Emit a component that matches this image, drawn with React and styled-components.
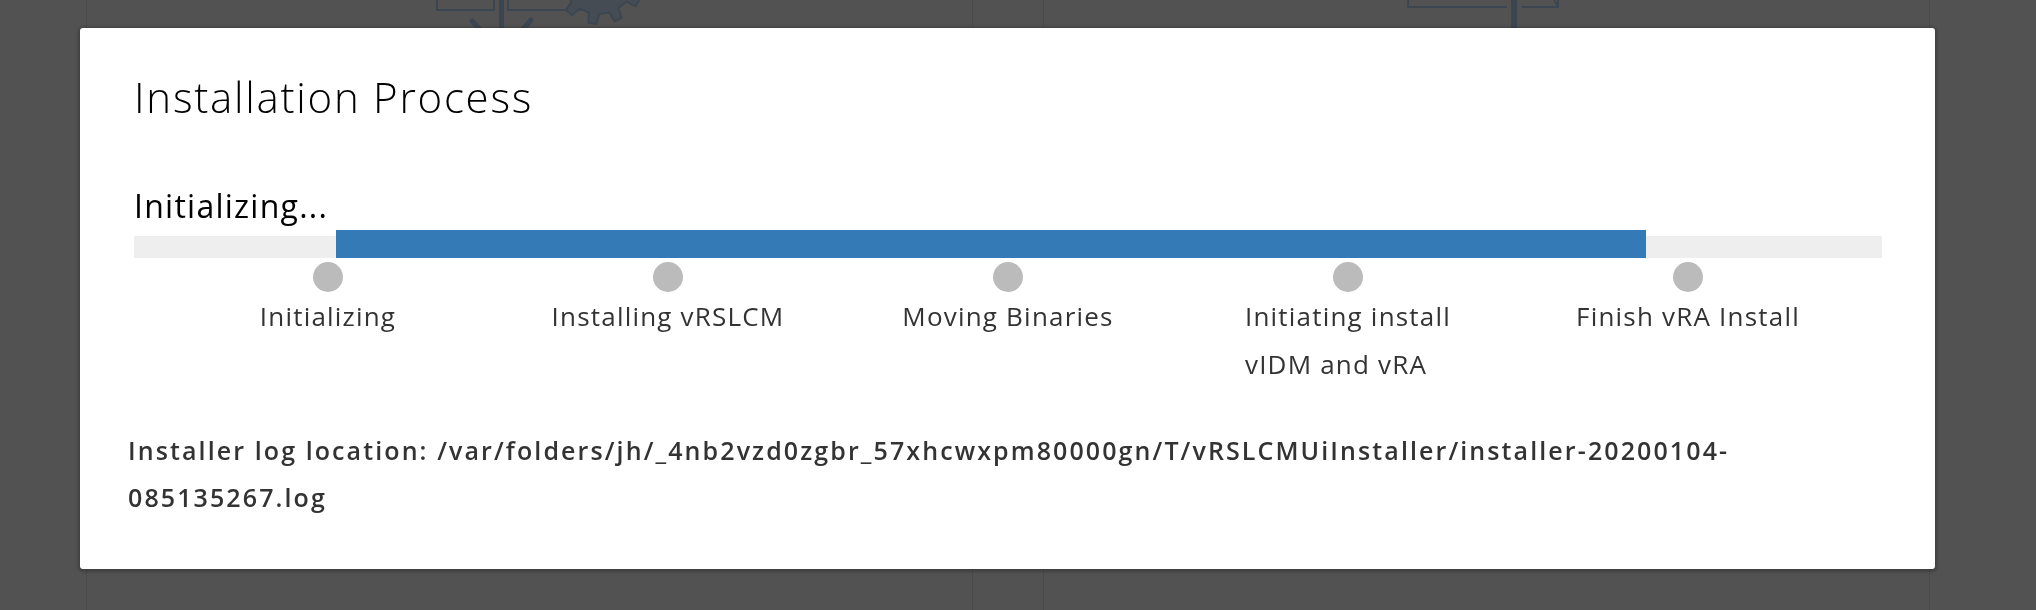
import React from "react";
import styled, { createGlobalStyle } from "styled-components";

const GlobalStyle = createGlobalStyle`
  html, body {
    margin: 0;
    padding: 0;
    background: #525252;
    font-family: "Open Sans", Lato, "Liberation Sans", sans-serif;
  }
  * { box-sizing: border-box; }
`;

const Page = styled.div`
  height: 610px;
  display: flex;
  gap: 70px;
  padding-left: 86px;
  overflow: hidden;
`;

const Card = styled.div`
  width: 887px;
  height: 100%;
  border-left: 1px solid #4a4a4a;
  border-right: 1px solid #4a4a4a;
  display: flex;
  justify-content: center;
`;

const CardIcon = styled.svg`
  display: block;
  overflow: hidden;
  margin-left: ${(p) => p.$shift || 0}px;
`;

const Overlay = styled.div`
  position: fixed;
  inset: 0;
  padding: 28px 0 0 80px;
`;

const Modal = styled.div`
  width: 1855px;
  background: #ffffff;
  border-radius: 3px;
  box-shadow: 0 1px 3px 2px rgba(0, 0, 0, 0.22);
  padding: 44px 53px 48px 48px;
`;

const Body = styled.div`
  padding-left: 6px;
`;

const Title = styled.h3`
  margin: 0;
  font-size: 42px;
  line-height: 50px;
  font-weight: 300;
  letter-spacing: 1.75px;
  color: #000;
`;

const Status = styled.div`
  margin-top: 65px;
  font-size: 32px;
  line-height: 38px;
  font-weight: 400;
  letter-spacing: 1.25px;
  color: #000;
`;

const Track = styled.div`
  margin-top: 5px;
  height: 28px;
  display: flex;
  align-items: flex-end;
`;

const Segment = styled.div`
  height: ${(p) => (p.$active ? 28 : 22)}px;
  background: ${(p) => (p.$active ? "#337ab7" : "#eeeeee")};
`;

const Steps = styled.div`
  margin-top: 4px;
  padding: 0 24px;
  display: grid;
  grid-template-columns: repeat(5, 1fr);
`;

const Step = styled.div`
  display: flex;
  flex-direction: column;
  align-items: center;
`;

const Dot = styled.span`
  width: 30px;
  height: 30px;
  border-radius: 50%;
  background: #bbbbbb;
`;

const StepLabel = styled.div`
  font-size: 26px;
  line-height: 48px;
  letter-spacing: 1.2px;
  color: #333333;
  text-align: left;
  white-space: nowrap;
`;

const Log = styled.p`
  margin: 39px 0 0;
  font-size: 25px;
  line-height: 47px;
  font-weight: 600;
  letter-spacing: 2.1px;
  color: #333333;
  white-space: nowrap;
`;

const steps = [
  ["Initializing"],
  ["Installing vRSLCM"],
  ["Moving Binaries"],
  ["Initiating install", "vIDM and vRA"],
  ["Finish vRA Install"],
];

const progress = { start: 11.56, width: 74.94 };

function gearPath(cx, cy, r, depth, teeth) {
  const pts = [];
  const step = (Math.PI * 2) / teeth;
  for (let i = 0; i < teeth; i++) {
    const a = i * step;
    const seq = [
      [a - step * 0.25, r],
      [a - step * 0.15, r + depth],
      [a + step * 0.15, r + depth],
      [a + step * 0.25, r],
    ];
    seq.forEach(([ang, rad]) =>
      pts.push(`${(cx + Math.cos(ang) * rad).toFixed(1)} ${(cy + Math.sin(ang) * rad).toFixed(1)}`)
    );
  }
  return `M${pts.join(" L")} Z`;
}

function ToolsIcon() {
  return (
    <CardIcon width="212" height="34" viewBox="0 0 212 34" $shift={24}>
      <g fill="none" stroke="#3c4650" strokeWidth="2">
        <path d="M1 -20 L1 10 L58 10 L58 -20" />
        <path d="M72 -20 L72 10 L153 10 L153 -20" />
      </g>
      <rect x="63" y="-10" width="5" height="44" fill="#3c4650" />
      <g stroke="#3c4650" strokeWidth="5" strokeLinecap="round">
        <line x1="36" y1="21" x2="48" y2="34" />
        <line x1="95" y1="20" x2="83" y2="34" />
      </g>
      <path
        d={gearPath(163, -22, 36, 10, 11)}
        fill="#464c53"
        stroke="#3c4650"
        strokeWidth="2"
        strokeLinejoin="round"
      />
    </CardIcon>
  );
}

function BoxIcon() {
  return (
    <CardIcon width="156" height="34" viewBox="0 0 156 34" $shift={-4}>
      <g fill="none" stroke="#3c4650" strokeWidth="2">
        <path d="M1 -20 L1 7 L100 7" />
        <path d="M115 7 L151 7 L151 -20" />
        <path d="M144 -6 L151 7" />
      </g>
      <rect x="104" y="-10" width="6" height="44" fill="#3c4650" />
    </CardIcon>
  );
}

export default function App() {
  return (
    <>
      <GlobalStyle />
      <Page>
        <Card>
          <ToolsIcon />
        </Card>
        <Card>
          <BoxIcon />
        </Card>
      </Page>
      <Overlay>
        <Modal>
          <Body>
            <Title>Installation Process</Title>
            <Status>Initializing...</Status>
            <Track>
              <Segment style={{ width: `${progress.start}%` }} />
              <Segment $active style={{ width: `${progress.width}%` }} />
              <Segment style={{ flex: 1 }} />
            </Track>
            <Steps>
              {steps.map((lines) => (
                <Step key={lines.join(" ")}>
                  <Dot />
                  <StepLabel>
                    {lines.map((l, i) => (
                      <React.Fragment key={l}>
                        {i > 0 && <br />}
                        {l}
                      </React.Fragment>
                    ))}
                  </StepLabel>
                </Step>
              ))}
            </Steps>
          </Body>
          <Log>
            Installer log location: /var/folders/jh/_4nb2vzd0zgbr_57xhcwxpm80000gn/T/vRSLCMUiInstaller/installer-20200104-
            <br />
            085135267.log
          </Log>
        </Modal>
      </Overlay>
    </>
  );
}
